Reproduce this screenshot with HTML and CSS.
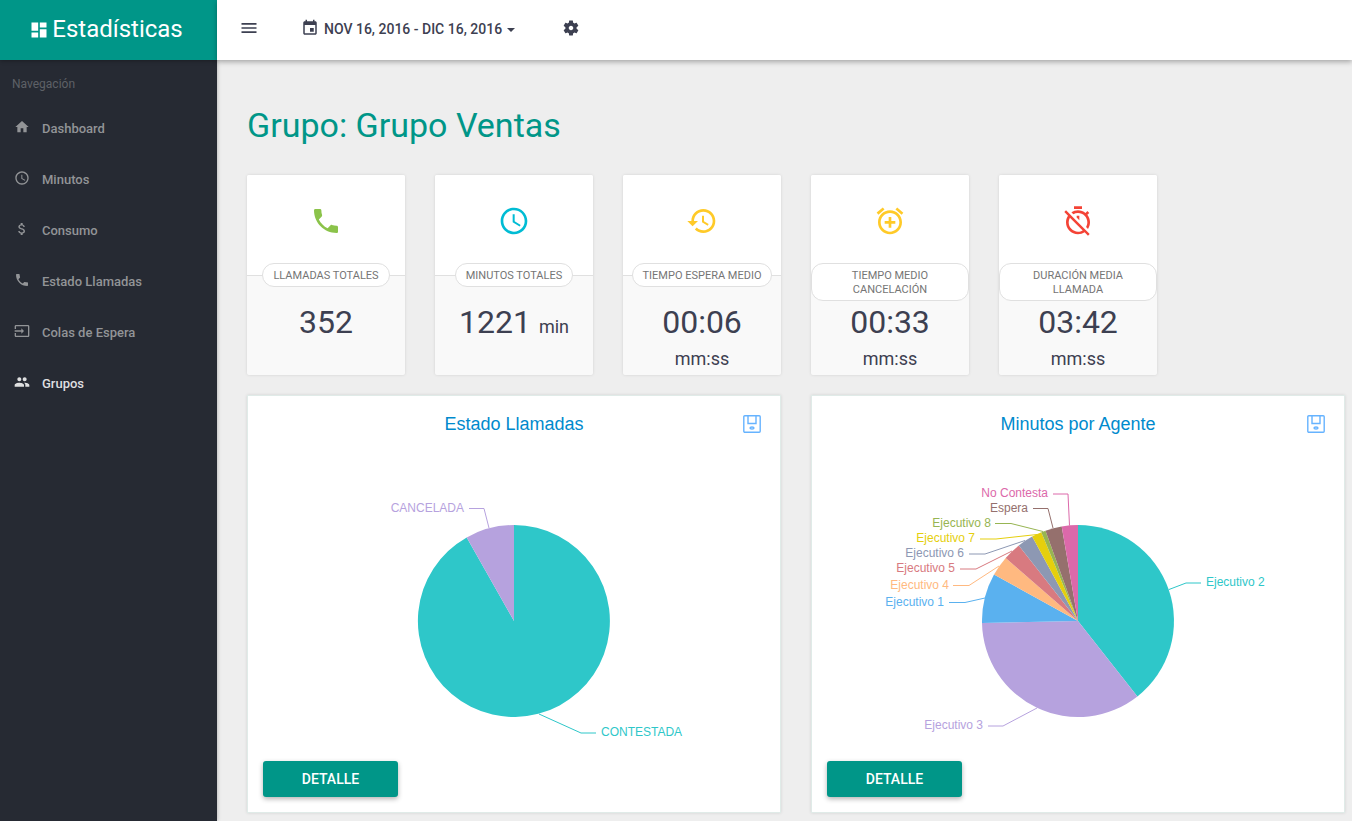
FILE: index.html
```html
<!DOCTYPE html>
<html lang="es">
<head>
<meta charset="utf-8">
<meta name="viewport" content="width=device-width, initial-scale=1">
<title>Estadísticas</title>
<link rel="stylesheet" href="styles.css">
</head>
<body>
<div class="app">
  <aside class="sidebar">
    <a class="brand" href="#">
      <svg class="icon-md" viewBox="0 0 24 24"><path d="M3 13h8V3H3v10zm0 8h8v-6H3v6zm10 0h8V11h-8v10zm0-18v6h8V3h-8z"/></svg>
      <span>Estadísticas</span>
    </a>
    <nav class="nav">
      <p class="nav-title">Navegación</p>
      <a class="nav-item" href="#"><svg class="icon-sm" viewBox="0 0 24 24"><path d="M10 20v-6h4v6h5v-8h3L12 3 2 12h3v8z"/></svg><span>Dashboard</span></a>
      <a class="nav-item" href="#"><svg class="icon-sm" viewBox="0 0 24 24"><path d="M11.99 2C6.47 2 2 6.48 2 12s4.47 10 9.99 10C17.52 22 22 17.52 22 12S17.52 2 11.99 2zM12 20c-4.42 0-8-3.58-8-8s3.58-8 8-8 8 3.58 8 8-3.58 8-8 8zm.5-13H11v6l5.25 3.15.75-1.23-4.5-2.67z"/></svg><span>Minutos</span></a>
      <a class="nav-item" href="#"><svg class="icon-sm" viewBox="0 0 24 24"><path d="M11.8 10.9c-2.27-.59-3-1.2-3-2.15 0-1.09 1.01-1.85 2.7-1.85 1.78 0 2.44.85 2.5 2.1h2.21c-.07-1.72-1.12-3.3-3.21-3.81V3h-3v2.16c-1.94.42-3.5 1.68-3.5 3.61 0 2.31 1.91 3.46 4.7 4.13 2.5.6 3 1.48 3 2.41 0 .69-.49 1.79-2.7 1.79-2.06 0-2.87-.92-2.98-2.1h-2.2c.12 2.19 1.76 3.42 3.68 3.83V21h3v-2.15c1.95-.37 3.5-1.5 3.5-3.55 0-2.84-2.43-3.81-4.7-4.4z"/></svg><span>Consumo</span></a>
      <a class="nav-item" href="#"><svg class="icon-sm" viewBox="0 0 24 24"><path d="M6.62 10.79c1.44 2.83 3.76 5.14 6.59 6.59l2.2-2.2c.27-.27.67-.36 1.02-.24 1.12.37 2.33.57 3.57.57.55 0 1 .45 1 1V20c0 .55-.45 1-1 1-9.39 0-17-7.61-17-17 0-.55.45-1 1-1h3.5c.55 0 1 .45 1 1 0 1.25.2 2.45.57 3.57.11.35.03.74-.25 1.02l-2.2 2.2z"/></svg><span>Estado Llamadas</span></a>
      <a class="nav-item" href="#"><svg class="icon-sm" viewBox="0 0 24 24"><path d="M21 3.01H3c-1.1 0-2 .9-2 2V9h2V4.99h18v14.03H3V15H1v4.01c0 1.1.9 1.98 2 1.98h18c1.1 0 2-.88 2-1.98v-14c0-1.11-.9-2-2-2zM11 16l4-4-4-4v3H1v2h10v3z"/></svg><span>Colas de Espera</span></a>
      <a class="nav-item active" href="#"><svg class="icon-sm" viewBox="0 0 24 24"><path d="M16 11c1.66 0 2.99-1.34 2.99-3S17.66 5 16 5c-1.66 0-3 1.34-3 3s1.34 3 3 3zm-8 0c1.66 0 2.99-1.34 2.99-3S9.66 5 8 5C6.34 5 5 6.34 5 8s1.34 3 3 3zm0 2c-2.33 0-7 1.17-7 3.5V19h14v-2.5c0-2.33-4.67-3.5-7-3.5zm8 0c-.29 0-.62.02-.97.05 1.16.84 1.97 1.97 1.97 3.45V19h6v-2.5c0-2.33-4.67-3.5-7-3.5z"/></svg><span>Grupos</span></a>
    </nav>
  </aside>

  <div class="page">
    <header class="topbar">
      <button class="tool" type="button" aria-label="Menú"><svg class="icon-md" viewBox="0 0 24 24"><path d="M3 18h18v-2H3v2zm0-5h18v-2H3v2zm0-7v2h18V6H3z"/></svg></button>
      <button class="tool dates" type="button">
        <svg class="icon-cal" viewBox="0 0 24 24"><path d="M17 12h-5v5h5v-5zM16 1v2H8V1H6v2H5c-1.11 0-1.99.9-1.99 2L3 19c0 1.1.89 2 2 2h14c1.1 0 2-.9 2-2V5c0-1.1-.9-2-2-2h-1V1h-2zm3 18H5V8h14v11z"/></svg>
        <span>NOV 16, 2016 - DIC 16, 2016</span>
        <i class="caret"></i>
      </button>
      <button class="tool" type="button" aria-label="Ajustes"><svg class="icon-cal" viewBox="0 0 24 24"><path d="M19.43 12.98c.04-.32.07-.64.07-.98s-.03-.66-.07-.98l2.11-1.65c.19-.15.24-.42.12-.64l-2-3.46c-.12-.22-.39-.3-.61-.22l-2.49 1c-.52-.4-1.08-.73-1.69-.98l-.38-2.65C14.46 2.18 14.25 2 14 2h-4c-.25 0-.46.18-.49.42l-.38 2.65c-.61.25-1.17.59-1.69.98l-2.49-1c-.23-.09-.49 0-.61.22l-2 3.46c-.13.22-.07.49.12.64l2.11 1.65c-.04.32-.07.65-.07.98s.03.66.07.98l-2.11 1.65c-.19.15-.24.42-.12.64l2 3.46c.12.22.39.3.61.22l2.49-1c.52.4 1.08.73 1.69.98l.38 2.65c.03.24.24.42.49.42h4c.25 0 .46-.18.49-.42l.38-2.65c.61-.25 1.17-.59 1.69-.98l2.49 1c.23.09.49 0 .61-.22l2-3.46c.12-.22.07-.49-.12-.64l-2.11-1.65zM12 15c-1.66 0-3-1.34-3-3s1.34-3 3-3 3 1.34 3 3-1.34 3-3 3z"/></svg></button>
    </header>

    <main class="content">
      <h1>Grupo: Grupo Ventas</h1>

      <section class="stats">
        <article class="stat">
          <div class="stat-top green"><svg class="icon-lg" viewBox="0 0 24 24"><path d="M6.62 10.79c1.44 2.83 3.76 5.14 6.59 6.59l2.2-2.2c.27-.27.67-.36 1.02-.24 1.12.37 2.33.57 3.57.57.55 0 1 .45 1 1V20c0 .55-.45 1-1 1-9.39 0-17-7.61-17-17 0-.55.45-1 1-1h3.5c.55 0 1 .45 1 1 0 1.25.2 2.45.57 3.57.11.35.03.74-.25 1.02l-2.2 2.2z"/></svg></div>
          <h2>LLAMADAS TOTALES</h2>
          <p class="value">352</p>
        </article>
        <article class="stat">
          <div class="stat-top cyan"><svg class="icon-lg" viewBox="0 0 24 24"><path d="M11.99 2C6.47 2 2 6.48 2 12s4.47 10 9.99 10C17.52 22 22 17.52 22 12S17.52 2 11.99 2zM12 20c-4.42 0-8-3.58-8-8s3.58-8 8-8 8 3.58 8 8-3.58 8-8 8zm.5-13H11v6l5.25 3.15.75-1.23-4.5-2.67z"/></svg></div>
          <h2>MINUTOS TOTALES</h2>
          <p class="value">1221 <small>min</small></p>
        </article>
        <article class="stat">
          <div class="stat-top amber"><svg class="icon-lg" viewBox="0 0 24 24"><path d="M13 3c-4.97 0-9 4.03-9 9H1l3.89 3.89.07.14L9 12H6c0-3.87 3.13-7 7-7s7 3.13 7 7-3.13 7-7 7c-1.93 0-3.68-.79-4.94-2.06l-1.42 1.42C8.27 19.99 10.51 21 13 21c4.97 0 9-4.03 9-9s-4.03-9-9-9zm-1 5v5l4.28 2.54.72-1.21-3.5-2.08V8H12z"/></svg></div>
          <h2>TIEMPO ESPERA MEDIO</h2>
          <p class="value">00:06 <small>mm:ss</small></p>
        </article>
        <article class="stat">
          <div class="stat-top amber"><svg class="icon-lg" viewBox="0 0 24 24"><path d="M7.88 3.39L6.6 1.86 2 5.71l1.29 1.53 4.59-3.85zM22 5.72l-4.6-3.86-1.29 1.53 4.6 3.86L22 5.72zM12 4c-4.97 0-9 4.03-9 9s4.02 9 9 9c4.97 0 9-4.03 9-9s-4.03-9-9-9zm0 16c-3.87 0-7-3.13-7-7s3.13-7 7-7 7 3.13 7 7-3.13 7-7 7zm1-11h-2v3H8v2h3v3h2v-3h3v-2h-3V9z"/></svg></div>
          <h2>TIEMPO MEDIO CANCELACIÓN</h2>
          <p class="value">00:33 <small>mm:ss</small></p>
        </article>
        <article class="stat">
          <div class="stat-top red"><svg class="icon-lg" viewBox="0 0 24 24"><path d="M19.04 4.55l-1.42 1.42C16.07 4.74 14.12 4 12 4c-1.83 0-3.53.55-4.95 1.48l1.46 1.46C9.53 6.35 10.73 6 12 6c3.87 0 7 3.13 7 7 0 1.27-.35 2.47-.94 3.49l1.45 1.45C20.45 16.53 21 14.83 21 13c0-2.12-.74-4.07-1.97-5.61l1.42-1.42-1.41-1.42zM15 1H9v2h6V1zm-4 8.44l2 2V8h-2v1.44zM3.02 4L1.75 5.27 4.5 8.03C3.55 9.45 3 11.16 3 13c0 4.97 4.02 9 9 9 1.84 0 3.55-.55 4.98-1.5l2.5 2.5 1.27-1.27-7.71-7.71L3.02 4zM12 20c-3.87 0-7-3.13-7-7 0-1.28.35-2.48.95-3.52l9.56 9.56c-1.03.61-2.23.96-3.51.96z"/></svg></div>
          <h2>DURACIÓN MEDIA LLAMADA</h2>
          <p class="value">03:42 <small>mm:ss</small></p>
        </article>
      </section>

      <section class="panels">
        <article class="panel">
          <header class="panel-head">
            <h3>Estado Llamadas</h3>
            <button class="save" type="button" aria-label="Guardar imagen"><svg viewBox="0 0 18 18"><rect x=".8" y=".8" width="16.4" height="16.4" rx="1"/><path d="M5 1v7.5h8V1"/><ellipse cx="9" cy="13" rx="2" ry="1"/></svg></button>
          </header>
          <svg class="chart" viewBox="0 0 532 300" role="img" aria-label="Estado Llamadas">
            <g class="c1"><path class="slice" d="M266 175V79A96 96 0 1 1 218.7 91.4Z"/><path class="lead" d="M291 268L333 287H348"/><text x="353" y="290">CONTESTADA</text></g>
            <g class="c2"><path class="slice" d="M266 175L218.7 91.4A96 96 0 0 1 266 79Z"/><path class="lead" d="M241 82L236 62.5H221"/><text class="end" x="216" y="66">CANCELADA</text></g>
          </svg>
          <button class="detail" type="button">DETALLE</button>
        </article>

        <article class="panel">
          <header class="panel-head">
            <h3>Minutos por Agente</h3>
            <button class="save" type="button" aria-label="Guardar imagen"><svg viewBox="0 0 18 18"><rect x=".8" y=".8" width="16.4" height="16.4" rx="1"/><path d="M5 1v7.5h8V1"/><ellipse cx="9" cy="13" rx="2" ry="1"/></svg></button>
          </header>
          <svg class="chart" viewBox="0 0 532 300" role="img" aria-label="Minutos por Agente">
            <g class="c1"><path class="slice" d="M266 175V79A96 96 0 0 1 325.4 250.4Z"/><path class="lead" d="M357 143.5L374 137H389"/><text x="394" y="140">Ejecutivo 2</text></g>
            <g class="c2"><path class="slice" d="M266 175L325.4 250.4A96 96 0 0 1 170 177Z"/><path class="lead" d="M225 262L191 280H176"/><text class="end" x="171" y="283">Ejecutivo 3</text></g>
            <g class="c3"><path class="slice" d="M266 175L170 177A96 96 0 0 1 182 128.6Z"/><path class="lead" d="M173 152L153 156.5H137"/><text class="end" x="132" y="160">Ejecutivo 1</text></g>
            <g class="c4"><path class="slice" d="M266 175L182 128.6A96 96 0 0 1 193.7 111.9Z"/><path class="lead" d="M187 120L157 139.5H141"/><text class="end" x="137" y="143">Ejecutivo 4</text></g>
            <g class="c5"><path class="slice" d="M266 175L193.7 111.9A96 96 0 0 1 206.8 99.5Z"/><path class="lead" d="M200 105L164 123H148"/><text class="end" x="143" y="126">Ejecutivo 5</text></g>
            <g class="c6"><path class="slice" d="M266 175L206.8 99.5A96 96 0 0 1 220.2 90.6Z"/><path class="lead" d="M213 94.5L173 108H157"/><text class="end" x="152" y="111">Ejecutivo 6</text></g>
            <g class="c7"><path class="slice" d="M266 175L220.2 90.6A96 96 0 0 1 229.3 86.3Z"/><path class="lead" d="M225 88.5L184 93H168"/><text class="end" x="163" y="96">Ejecutivo 7</text></g>
            <g class="c8"><path class="slice" d="M266 175L229.3 86.3A96 96 0 0 1 233.5 84.7Z"/><path class="lead" d="M231 85.5L199 77.5H183"/><text class="end" x="179" y="81">Ejecutivo 8</text></g>
            <g class="c9"><path class="slice" d="M266 175L233.5 84.7A96 96 0 0 1 249.7 80.4Z"/><path class="lead" d="M241 82L236 62.5H221"/><text class="end" x="216" y="66">Espera</text></g>
            <g class="c10"><path class="slice" d="M266 175L249.7 80.4A96 96 0 0 1 266 79Z"/><path class="lead" d="M257.5 79.5L256 48H241"/><text class="end" x="236" y="51">No Contesta</text></g>
          </svg>
          <button class="detail" type="button">DETALLE</button>
        </article>
      </section>
    </main>
  </div>
</div>
</body>
</html>
```
FILE: styles.css
```css
* { box-sizing: border-box; }
body {
  margin: 0;
  background: #eee;
  color: #3d4051;
  font-family: Roboto, "Liberation Sans", sans-serif;
  font-size: 14px;
}
h1, h2, h3, p { margin: 0; font-weight: 400; }
a { color: inherit; text-decoration: none; }
button { border: 0; background: none; padding: 0; font: inherit; color: inherit; cursor: pointer; }
svg { display: block; fill: currentColor; flex: none; }

.icon-sm { width: 16px; height: 16px; }
.icon-cal { width: 18px; height: 18px; }
.icon-md { width: 20px; height: 20px; }
.icon-lg { width: 32px; height: 32px; }

.app { display: flex; min-height: 100vh; }

.sidebar {
  flex: none;
  width: 217px;
  background: #262a33;
  box-shadow: 0 0 4px rgba(0, 0, 0, .3);
}
.brand {
  display: flex;
  align-items: center;
  justify-content: center;
  gap: 3px;
  height: 60px;
  padding-right: 5px;
  background: #009688;
  color: #fff;
  font-size: 24px;
  box-shadow: 0 1px 4px rgba(0, 0, 0, .3);
}
.brand span { line-height: 28px; padding-bottom: 2px; }
.nav { padding-top: 14px; }
.nav-title { padding: 0 12px; font-size: 12px; line-height: 20px; color: #5e6167; }
.nav-item {
  display: flex;
  align-items: center;
  gap: 12px;
  height: 51px;
  padding: 0 14px;
  font-size: 13px;
  font-weight: 500;
  color: #929497;
}
.nav-title + .nav-item { margin-top: 9px; }
.nav-item svg { margin-bottom: 3px; }
.nav-item.active { color: #dedfe0; }

.page { flex: 1; min-width: 0; }
.topbar {
  display: flex;
  align-items: center;
  gap: 42px;
  height: 60px;
  padding: 0 22px 4px;
  background: #fff;
  box-shadow: 0 2px 5px rgba(0, 0, 0, .3);
}
.tool { display: flex; align-items: center; font-weight: 500; }
.dates { gap: 5px; padding-right: 5px; }
.dates span { padding-top: 2px; }
.caret { border: 4px solid transparent; border-top-color: currentColor; border-bottom: 0; margin-top: 4px; }

.content { padding: 43px 7px 8px 30px; }
h1 { font-size: 34px; line-height: 44px; color: #009688; }

.stats {
  display: grid;
  grid-template-columns: repeat(6, 1fr);
  gap: 30px;
  margin-top: 28px;
}
.stat {
  display: flex;
  flex-direction: column;
  align-items: center;
  min-height: 200px;
  border-radius: 2px;
  background: #f9f9f9;
  box-shadow: 0 0 3px rgba(0, 0, 0, .12);
  text-align: center;
}
.stat-top {
  display: flex;
  align-items: center;
  justify-content: center;
  width: 100%;
  height: 101px;
  padding-top: 1px;
  padding-bottom: 9px;
  border-bottom: 1px solid #e0e0e0;
  border-radius: 2px 2px 0 0;
  background: #fff;
}
.stat h2 {
  margin-top: -13px;
  padding: 5px 10px 3px;
  border: 1px solid #e0e0e0;
  border-radius: 12px;
  background: #fff;
  color: #757575;
  font-size: 11px;
  line-height: 14px;
}
.stat .value {
  margin-top: auto;
  height: 69px;
  padding: 0 20px;
  font-size: 32px;
  line-height: 32px;
}
.value small { font-size: 18px; }
.green { color: #8bc34a; }
.cyan { color: #00bcd4; }
.amber { color: #ffca28; }
.red { color: #f44336; }

.panels {
  display: grid;
  grid-template-columns: 1fr 1fr;
  gap: 30px;
  margin-top: 20px;
}
.panel {
  border: 1px solid #e0ebe8;
  background: #fff;
  box-shadow: 0 0 3px rgba(0, 0, 0, .12);
}
.panel-head {
  display: grid;
  grid-template-columns: 1fr auto 1fr;
  align-items: center;
  height: 50px;
  padding: 6px 19px 0;
  color: #008acd;
  font-family: "Liberation Sans", Arial, sans-serif;
}
.panel-head h3 { grid-column: 2; font-size: 18px; line-height: 22px; }
.save { justify-self: end; width: 18px; height: 18px; }
.save svg { width: 100%; fill: none; stroke: #66b3ff; stroke-width: 1.4; }
.chart { width: 100%; height: auto; font: 12px "Liberation Sans", Arial, sans-serif; }
.chart .lead { fill: none; stroke: currentColor; }
.chart .end { text-anchor: end; }
.c1 { color: #2ec7c9; }
.c2 { color: #b6a2de; }
.c3 { color: #5ab1ef; }
.c4 { color: #ffb980; }
.c5 { color: #d87a80; }
.c6 { color: #8d98b3; }
.c7 { color: #e5cf0d; }
.c8 { color: #97b552; }
.c9 { color: #95706d; }
.c10 { color: #dc69aa; }

.detail {
  margin: 15px;
  min-width: 135px;
  height: 36px;
  border-radius: 3px;
  background: #009688;
  color: #fff;
  font-weight: 500;
  box-shadow: 0 2px 5px rgba(0, 0, 0, .3);
}
```
